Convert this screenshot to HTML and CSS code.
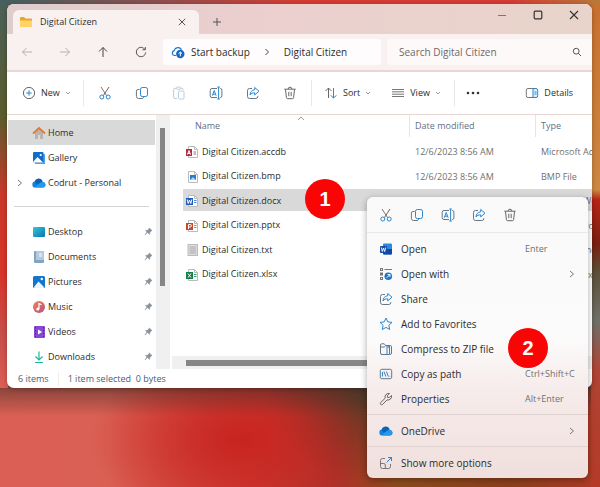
FILE: index.html
```
<!DOCTYPE html>
<html lang="en">
<head>
<meta charset="utf-8">
<title>Digital Citizen</title>
<link rel="stylesheet" href="styles.css">
</head>
<body>
<svg class="defs" aria-hidden="true">
  <symbol id="cut" viewBox="0 0 14 14"><path d="M3 1l5.6 8.6" stroke="#8a7068"/><path d="M11 1L5.4 9.6" stroke="#666"/><circle cx="3.8" cy="11" r="2" stroke="#2b86cf"/><circle cx="10.2" cy="11" r="2" stroke="#2b86cf"/></symbol>
  <symbol id="copy" viewBox="0 0 14 14"><path d="M4.500 3.500H3a1.600 1.600 0 0 0-1.600 1.600v5.200A2.200 2.200 0 0 0 3.600 12.500h3.400a1.600 1.600 0 0 0 1.600-1.300" stroke="#70757a"/><rect x="5.500" y="1.500" width="7" height="9" rx="1.800" stroke="#2b86cf"/></symbol>
  <symbol id="paste" viewBox="0 0 14 14"><path d="M5 12.500H3A1.300 1.300 0 0 1 1.700 11.200V3.500A1.200 1.200 0 0 1 3 2.300h1.500M8.500 2.300H10a1 1 0 0 1 1 1V4" stroke="#c4c8cc"/><rect x="4.500" y="1" width="4" height="2.300" rx="1" stroke="#c4c8cc"/><rect x="6.500" y="5" width="5.500" height="8" rx="1" stroke="#b3d0e8"/></symbol>
  <symbol id="rename" viewBox="0 0 14 14"><path d="M8 2.500H3A1.800 1.800 0 0 0 1.200 4.300v5.400A1.800 1.800 0 0 0 3 11.500h5M11 2.500h.3a1.600 1.600 0 0 1 1.600 1.600v5.800a1.600 1.600 0 0 1-1.600 1.600H11" stroke="#667684"/><path d="M9.600 1v12M8.300 1h2.600M8.300 13h2.600M3.300 9.700l1.900-5.200 1.900 5.200M4 8.200h2.500" stroke="#2b86cf"/></symbol>
  <symbol id="share" viewBox="0 0 14 14"><path d="M6 2.500H3.500a2 2 0 0 0-2 2v6a2 2 0 0 0 2 2h6.300a2 2 0 0 0 2-2V10" stroke="#667684"/><path d="M8.700 1.500L13 5.200 8.700 8.900V6.800C6.500 6.700 5 7.400 4 9c.2-3 1.800-5 4.700-5.200z" stroke="#2b86cf"/></symbol>
  <symbol id="trash" viewBox="0 0 14 14"><path d="M1.300 3.200h11.400M5.200 3a1.800 1.800 0 0 1 3.600 0M2.500 3.500l.9 8.200a1.200 1.200 0 0 0 1.200 1h4.800a1.200 1.200 0 0 0 1.200-1l.9-8.200M5.800 5.800v4.400M8.200 5.800v4.400" stroke="#666"/></symbol>
  <symbol id="chev" viewBox="0 0 6 6"><path d="M1 2l2 2 2-2" stroke="#999"/></symbol>
  <symbol id="right" viewBox="0 0 6 8"><path d="M1 1l3.500 3L1 7" stroke="#777"/></symbol>
  <symbol id="cloud" viewBox="0 0 14 14"><path d="M3.500 11.500a3 3 0 0 1-.3-6A4.300 4.300 0 0 1 11 6a2.800 2.800 0 0 1 .2 5.500z" fill="#1384d8"/><path d="M2.500 5.700a4.300 4.300 0 0 1 8-.8L5 9z" fill="#0b62b8"/><path d="M5 9l5-3a3 3 0 0 1 3.500 3.500q-.4 2-2.300 2H4z" fill="#2299ea"/></symbol>
  <symbol id="pin" viewBox="0 0 10 10"><path d="M5.800 1l3.200 3-1 .4-1.500 1.800-.3 2L3.900 6.200 1 9l2.200-3.400L1.600 3.900l2.300-.2L5.500 2z" fill="#89919a" stroke="#89919a" stroke-width=".5"/></symbol>
  <symbol id="picture" viewBox="0 0 14 14"><rect x="1" y="1" width="12" height="12" rx="1.500" fill="#1475cf"/><path d="M2 12l4.500-5.500L12 12q0 1-1 1H3Q2 13 2 12z" fill="#e9f6ff"/><circle cx="9.800" cy="4" r="1.200" fill="#fff"/></symbol>
  <symbol id="page" viewBox="0 0 14 14"><path d="M3.500 1.500h6l3 3v8h-9z" fill="#fff" stroke="#bbb"/><path d="M9.500 1.500v3h3" stroke="#bbb"/></symbol>
</svg>

<main class="desktop">
<section class="window">
  <header class="titlebar">
    <div class="tab">
      <svg class="i14" viewBox="0 0 14 14"><path d="M1 3q0-1 1-1h3l1.500 1.500H12q1 0 1 1V11q0 1-1 1H2q-1 0-1-1z" fill="#e7a62c"/><path d="M1 5.500h12V11q0 1-1 1H2q-1 0-1-1z" fill="#ffd366"/></svg>
      <span class="tab-title">Digital Citizen</span>
      <button aria-label="Close tab"><svg class="i8" viewBox="0 0 8 8"><path d="M.8.800l6.400 6.400M7.200.8L.8 7.200" stroke="#555"/></svg></button>
    </div>
    <button class="new-tab" aria-label="New tab"><svg class="i8" viewBox="0 0 8 8"><path d="M4 0v8M0 4h8" stroke="#555"/></svg></button>
    <div class="controls">
      <button aria-label="Minimize"><svg class="i10" viewBox="0 0 10 10"><path d="M1 5.500h8" stroke="#777"/></svg></button>
      <button aria-label="Maximize"><svg class="i10" viewBox="0 0 10 10"><rect x="1.200" y="1.200" width="7.600" height="7.600" rx="1" stroke="#333" stroke-width="1.200"/></svg></button>
      <button aria-label="Close"><svg class="i10" viewBox="0 0 10 10"><path d="M1 1l8 8M9 1L1 9" stroke="#333" stroke-width="1.100"/></svg></button>
    </div>
  </header>

  <nav class="navbar">
    <div class="arrows">
      <button aria-label="Back"><svg class="i12" viewBox="0 0 12 12"><path d="M11 6H1.500M5.500 2l-4 4 4 4" stroke="#b9aeae"/></svg></button>
      <button aria-label="Forward"><svg class="i12" viewBox="0 0 12 12"><path d="M1 6h9.500M6.500 2l4 4-4 4" stroke="#b9aeae"/></svg></button>
      <button aria-label="Up"><svg class="i12" viewBox="0 0 12 12"><path d="M6 11V1.500M2 5.500l4-4 4 4" stroke="#444"/></svg></button>
      <button aria-label="Refresh"><svg class="i12" viewBox="0 0 12 12"><path d="M10 3.500A4.700 4.700 0 1 0 10.700 6.500M10.300 1v2.800H7.500" stroke="#555"/></svg></button>
    </div>
    <div class="address">
      <svg class="i14" viewBox="0 0 14 14"><path d="M5 10.500H3.500A2.500 2.500 0 0 1 3.200 5.600a4 4 0 0 1 7.300-1" stroke="#1976c8" stroke-width="1.200"/><circle cx="9.300" cy="9" r="4.200" fill="#1466c0"/><path d="M9.300 11.300V7M7.500 8.700L9.300 7l1.800 1.700" stroke="#fff"/></svg>
      <a href="#">Start backup</a>
      <svg class="i8" viewBox="0 0 8 8"><path d="M2.500 1l3 3-3 3" stroke="#444"/></svg>
      <a href="#">Digital Citizen</a>
    </div>
    <label class="search">
      <input type="text" placeholder="Search Digital Citizen" aria-label="Search Digital Citizen">
      <svg class="i10" viewBox="0 0 10 10"><circle cx="4.200" cy="4.200" r="2.900" stroke="#555"/><path d="M6.300 6.300L9 9" stroke="#555"/></svg>
    </label>
  </nav>

  <div class="toolbar">
    <button class="labelled new"><svg class="i14" viewBox="0 0 14 14"><circle cx="7" cy="7" r="5.600" stroke="#666"/><path d="M7 4.300v5.400M4.300 7h5.400" stroke="#2b86cf"/></svg>New<svg class="i6"><use href="#chev"/></svg></button>
    <div class="tools">
      <button aria-label="Cut"><svg class="i14"><use href="#cut"/></svg></button>
      <button aria-label="Copy"><svg class="i14"><use href="#copy"/></svg></button>
      <button aria-label="Paste"><svg class="i14"><use href="#paste"/></svg></button>
      <button aria-label="Rename"><svg class="i14"><use href="#rename"/></svg></button>
      <button aria-label="Share"><svg class="i14"><use href="#share"/></svg></button>
      <button aria-label="Delete"><svg class="i14"><use href="#trash"/></svg></button>
    </div>
    <div class="arrange">
      <button class="labelled"><svg class="i14" viewBox="0 0 14 14"><path d="M4.500 12V2M1.500 5l3-3 3 3" stroke="#666"/><path d="M9.500 2v10M6.800 9.300L9.500 12l3-2.700" stroke="#2b86cf"/></svg>Sort<svg class="i6"><use href="#chev"/></svg></button>
      <button class="labelled"><svg class="i14" viewBox="0 0 14 14"><path d="M1 3.500h12M1 5.800h12M1 8.200h12M1 10.500h12" stroke="#777"/></svg>View<svg class="i6"><use href="#chev"/></svg></button>
    </div>
    <button class="more" aria-label="See more"><svg class="i14" viewBox="0 0 14 14"><circle cx="2" cy="7" r="1.300" fill="#333"/><circle cx="7" cy="7" r="1.300" fill="#333"/><circle cx="12" cy="7" r="1.300" fill="#333"/></svg></button>
    <button class="labelled details"><svg class="i14" viewBox="0 0 14 14"><path d="M8.500 2.500H3A1.700 1.700 0 0 0 1.300 4.200v5.600A1.700 1.700 0 0 0 3 11.500h5.500" stroke="#777"/><path d="M8 2.500h3a1.700 1.700 0 0 1 1.700 1.700v5.600a1.700 1.700 0 0 1-1.700 1.700H8z" fill="#d9efff" stroke="#2b86cf"/><path d="M9.500 6h2M9.500 8h2" stroke="#2b86cf"/></svg>Details</button>
  </div>

  <div class="body">
    <aside class="sidebar">
      <a class="place current" href="#"><svg class="i14" viewBox="0 0 14 14"><path d="M3 6v7h3V9h2v4h3V6L7 2.500z" fill="#b8b4b2"/><path d="M1 7.500L7 2l6 5.500" stroke="#e27a2d" stroke-width="1.700"/></svg>Home</a>
      <a class="place" href="#"><svg class="i14" viewBox="0 0 14 14"><path d="M3 3h10v10H3z" fill="#4ba4e8"/><path d="M1 2q0-1 1-1h8.500q1 0 1 1v9.500H2q-1 0-1-1z" fill="#146cc8"/><path d="M1 11l4.500-5L11 11.500H2z" fill="#fff"/><circle cx="8.700" cy="4" r="1.100" fill="#fff"/></svg>Gallery</a>
      <a class="place" href="#"><svg class="i8 expand"><use href="#right"/></svg><svg class="i14"><use href="#cloud"/></svg>Codrut - Personal</a>
      <hr>
      <a class="place" href="#"><svg class="i14" viewBox="0 0 14 14"><linearGradient id="teal" x2="1" y2="1"><stop stop-color="#39c6cf"/><stop offset="1" stop-color="#0875b8"/></linearGradient><rect x="1" y="2" width="12" height="10" rx="1" fill="url(#teal)"/></svg>Desktop<svg class="pin"><use href="#pin"/></svg></a>
      <a class="place" href="#"><svg class="i14" viewBox="0 0 14 14"><rect x="2" y="1" width="10" height="12" rx="1" fill="#83a3c2"/><path d="M4 1h8v9H4z" fill="#b4c9dc"/><path d="M7 4h3M7 6h3" stroke="#fff"/></svg>Documents<svg class="pin"><use href="#pin"/></svg></a>
      <a class="place" href="#"><svg class="i14"><use href="#picture"/></svg>Pictures<svg class="pin"><use href="#pin"/></svg></a>
      <a class="place" href="#"><svg class="i14" viewBox="0 0 14 14"><linearGradient id="coral" x2="1" y2="1"><stop stop-color="#ed824e"/><stop offset="1" stop-color="#b95186"/></linearGradient><circle cx="7" cy="7" r="6" fill="url(#coral)"/><circle cx="5.800" cy="9" r="1.500" fill="#fff"/><path d="M7 9V3.500l2.500 1.200" stroke="#fff" stroke-width="1.200"/></svg>Music<svg class="pin"><use href="#pin"/></svg></a>
      <a class="place" href="#"><svg class="i14" viewBox="0 0 14 14"><rect x="2" y="1" width="11" height="12" rx="1" fill="#8748d4"/><path d="M3.500 2v10M11.500 2v10" stroke="#5520a5" stroke-dasharray="1.500 1.500"/><path d="M6 4.500l4 2.500-4 2.500z" fill="#fff"/></svg>Videos<svg class="pin"><use href="#pin"/></svg></a>
      <a class="place" href="#"><svg class="i14" viewBox="0 0 14 14"><path d="M7 1.500v8M3.500 6.500L7 10l3.500-3.500M3 12.500h8" stroke="#22b69a" stroke-width="1.200"/></svg>Downloads<svg class="pin"><use href="#pin"/></svg></a>
    </aside>
    <div class="vscroll"><div class="thumb"></div></div>
    <div class="files">
      <svg class="sorted" viewBox="0 0 8 5"><path d="M1 4l3-3 3 3" stroke="#999"/></svg>
      <table>
        <colgroup><col class="c-name"><col class="c-date"><col></colgroup>
        <thead><tr><th>Name</th><th>Date modified</th><th>Type</th></tr></thead>
        <tbody>
          <tr><td><svg class="i14"><use href="#page"/><path d="M1 4h6v7H1z" fill="#b52b41"/><path d="M2.500 9.500L4 5.500l1.500 4M3 8.500h2" stroke="#fff"/><path d="M8.500 7h2.500M8.500 9h2.500" stroke="#c85b68"/></svg>Digital Citizen.accdb</td><td>12/6/2023 8:56 AM</td><td>Microsoft Access Database</td></tr>
          <tr><td><svg class="i14"><use href="#page"/><rect x="5" y="5" width="6" height="5" fill="#2b79ca"/><path d="M5 10l3-3 3 3z" fill="#a8d4f5"/></svg>Digital Citizen.bmp</td><td>12/6/2023 8:56 AM</td><td>BMP File</td></tr>
          <tr class="selected"><td><svg class="i14"><use href="#page"/><path d="M1 4h7v7H1z" fill="#245bbb"/><path d="M2.200 5.500l1 4 1.300-3.500 1.300 3.500 1-4" stroke="#fff"/><path d="M9 6.500h2.500M9 8.500h2.500" stroke="#438ada"/></svg>Digital Citizen.docx</td><td>12/6/2023 8:56 AM</td><td>Microsoft Word Document</td></tr>
          <tr><td><svg class="i14"><use href="#page"/><path d="M1 4h7v7H1z" fill="#cb4628"/><path d="M3.500 10V5.500H5q1.500 0 1.500 1.200T5 8H3.500" stroke="#fff"/><path d="M9 6.500h2.500M9 8.500h2.500" stroke="#da7959"/></svg>Digital Citizen.pptx</td><td>12/6/2023 8:56 AM</td><td>Microsoft PowerPoint Presentation</td></tr>
          <tr><td><svg class="i14"><rect x="3" y="1.500" width="9.500" height="11" fill="#ddd" stroke="#bbb"/><path d="M4.500 4h6.500M4.500 6h6.500M4.500 8h6.500M4.500 10h6.500" stroke="#aaa"/></svg>Digital Citizen.txt</td><td>12/6/2023 8:56 AM</td><td>Text Document</td></tr>
          <tr><td><svg class="i14"><use href="#page"/><path d="M1 4h7v7H1z" fill="#14804a"/><path d="M3 5.500l3 4M6 5.500l-3 4" stroke="#fff"/><path d="M9 6.500h2.500M9 8.500h2.500" stroke="#36a56c"/></svg>Digital Citizen.xlsx</td><td>12/6/2023 8:56 AM</td><td>Microsoft Excel Worksheet</td></tr>
        </tbody>
      </table>
      <div class="hscroll"><div class="thumb"></div></div>
    </div>
  </div>
  <footer class="status"><span>6 items</span><span class="picked">1 item selected&nbsp; 0 bytes</span></footer>
</section>

<div class="menu" role="menu">
  <div class="quick">
    <button aria-label="Cut"><svg class="i14"><use href="#cut"/></svg></button>
    <button aria-label="Copy"><svg class="i14"><use href="#copy"/></svg></button>
    <button aria-label="Rename"><svg class="i14"><use href="#rename"/></svg></button>
    <button aria-label="Share"><svg class="i14"><use href="#share"/></svg></button>
    <button aria-label="Delete"><svg class="i14"><use href="#trash"/></svg></button>
  </div>
  <div class="group">
    <button class="entry" role="menuitem"><svg class="i14" viewBox="0 0 14 14"><rect x="4" y="1.500" width="9" height="11" rx="1" fill="#2b8ae0"/><path d="M4 7h9v4.500q0 1-1 1H5q-1 0-1-1z" fill="#1547a0"/><rect x="1" y="4" width="7" height="7" rx=".8" fill="#174ea6"/><path d="M2.300 5.500l1 4 1.200-3.500 1.200 3.500 1-4" stroke="#fff" stroke-width=".9"/></svg>Open<kbd>Enter</kbd></button>
    <button class="entry" role="menuitem"><svg class="i14" viewBox="0 0 14 14"><rect x="1.500" y="1.500" width="2" height="2" stroke="#777"/><rect x="1.500" y="6" width="2" height="2" stroke="#777"/><rect x="1.500" y="10.500" width="2" height="2" stroke="#777"/><path d="M5.500 2.500H13" stroke="#777"/><circle cx="9.300" cy="9.200" r="3.800" fill="#1977ce"/><path d="M7.800 10.700l3-3M8.600 7.500h2.400v2.400" stroke="#fff"/></svg>Open with<svg class="i8 go"><use href="#right"/></svg></button>
    <button class="entry" role="menuitem"><svg class="i14"><use href="#share"/></svg>Share</button>
    <button class="entry" role="menuitem"><svg class="i14" viewBox="0 0 14 14"><path d="M7 1l1.800 3.900 4.200.5-3.100 2.900.8 4.200L7 10.400l-3.700 2.100.8-4.200L1 5.400l4.200-.5z" stroke="#2b86cf"/></svg>Add to Favorites</button>
    <button class="entry" role="menuitem"><svg class="i14" viewBox="0 0 14 14"><path d="M8 12.500H3A1.500 1.500 0 0 1 1.500 11V3A1.300 1.300 0 0 1 2.800 1.800h2.400L6.800 3.500h4.400a1.300 1.300 0 0 1 1.300 1.300V11a1.500 1.500 0 0 1-1.500 1.500M1.500 5h3.700l1.600-1.500" stroke="#667684"/><path d="M8 4v8.500h2.500V4M9.200 3v3" stroke="#2b86cf"/></svg>Compress to ZIP file</button>
    <button class="entry" role="menuitem"><svg class="i14" viewBox="0 0 14 14"><rect x="1.300" y="2.300" width="11.400" height="9.400" rx="1.500" stroke="#667684"/><path d="M3.500 5v4.500M5 4.500l1.800 5M7.500 4.500l1.800 5M10.500 9.300h.7" stroke="#2b86cf"/></svg>Copy as path<kbd>Ctrl+Shift+C</kbd></button>
    <button class="entry" role="menuitem"><svg class="i14" viewBox="0 0 14 14"><path d="M12.500 3.500L10.300 5.500 8.500 5.300 8.300 3.600 10.500 1.500A3.600 3.600 0 0 0 6.200 6.200L1.700 10.500a1.300 1.300 0 0 0 1.900 1.900L8 7.900a3.600 3.600 0 0 0 4.500-4.400z" stroke="#666"/></svg>Properties<kbd>Alt+Enter</kbd></button>
  </div>
  <div class="group"><button class="entry" role="menuitem"><svg class="i14"><use href="#cloud"/></svg>OneDrive<svg class="i8 go"><use href="#right"/></svg></button></div>
  <div class="group"><button class="entry" role="menuitem"><svg class="i14" viewBox="0 0 14 14"><path d="M6 2.500H3.500a2 2 0 0 0-2 2v6a2 2 0 0 0 2 2h6a2 2 0 0 0 2-2V8M1.500 7.500h3.300a1.500 1.500 0 0 1 1.500 1.500v3.500" stroke="#777"/><path d="M7.500 6.500l5-5M9 1.500h3.500V5" stroke="#2b86cf"/></svg>Show more options</button></div>
</div>
<div class="step first">1</div>
<div class="step second">2</div>
</main>
</body>
</html>
```

FILE: styles.css
```
* { box-sizing: border-box; }
body {
  margin: 0;
  font: 9px/14px "Open Sans", "Noto Sans", sans-serif;
  color: #2c2c2c;
}
button, input { font: inherit; color: inherit; border: 0; padding: 0; background: none; }
button { display: flex; align-items: center; justify-content: center; white-space: nowrap; }
a { color: inherit; text-decoration: none; }
svg { fill: none; flex: none; }
.defs { display: none; }
.i14 { width: 14px; height: 14px; }
.i12 { width: 12px; height: 12px; }
.i10 { width: 10px; height: 10px; }
.i8 { width: 8px; height: 8px; }
.i6 { width: 6px; height: 6px; }

.desktop {
  position: relative;
  min-height: 100vh;
  padding: 4px 8px 0 7px;
  overflow: hidden;
  background:
    linear-gradient(90deg, #43605f, #8a5050 25%, #d63c34 50%, #d63c34 85%, #b87a38) top / 100% 5px no-repeat,
    linear-gradient(#4a6058, #5c5c2c 30%, #c8382a 50%, #d83428 70%, #c84e48 86%, #dc5f54) left top / 8px 388px no-repeat,
    linear-gradient(#c8702f, #cc8842 39%, #b82416 41%, #7a2012 50%, #5c5038 56%, #70706a 66%, #b04434 76%, #b53a28) right top / 9px 100% no-repeat,
    linear-gradient(#4a302899, #4a302800) left 0 top 386px / 100% 30px no-repeat,
    radial-gradient(ellipse 150px 90px at 240px 440px, #c82420, #c8242000),
    radial-gradient(ellipse 100px 90px at 365px 390px, #4a3c28, #4a3c2800),
    linear-gradient(90deg, #dc5f54, #da6054 18%, #cc3c32 42%, #a83228 56%, #8c4c1c 66%, #8c401c 85%, #b03a26);
}
.window {
  border-radius: 7px;
  overflow: hidden;
  background: #fff;
  box-shadow: 0 1px 5px #0004;
}
.titlebar {
  display: flex;
  height: 30px;
  padding-left: 6px;
  background: linear-gradient(90deg, #dfcccc, #ebcfcf 40%, #e8d4ca);
}
.tab {
  display: flex;
  align-items: center;
  gap: 7px;
  width: 186px;
  margin-top: 6px;
  padding: 0 13px 0 6px;
  border-radius: 6px 6px 0 0;
  background: #f9f1f0;
}
.tab-title { flex: 1; }
.new-tab { width: 36px; padding-top: 6px; }
.controls { display: flex; margin-left: auto; height: 22px; }
.controls button { width: 36px; }
.navbar {
  display: flex;
  align-items: center;
  height: 38px;
  font-size: 10px;
  background: #f9f1f0;
  border-bottom: 2px solid #e9d7d7;
}
.arrows { display: flex; width: 156px; padding-left: 1px; }
.arrows button { width: 38px; }
.address {
  display: flex;
  align-items: center;
  gap: 6px;
  width: 218px;
  height: 26px;
  padding-left: 8px;
  border-radius: 4px;
  background: #fefcfc;
}
.address .i8 { margin: 0 7px; }
.search {
  display: flex;
  align-items: center;
  flex: 1;
  height: 26px;
  margin-left: 6px;
  padding: 0 10px 0 12px;
  border-radius: 4px 0 0 4px;
  background: #fdf9f8;
}
.search input { flex: 1; min-width: 0; outline: 0; }
.search input::placeholder { color: #6d6868; opacity: 1; }
.toolbar {
  display: flex;
  align-items: center;
  height: 43px;
  border-bottom: 1px solid #e6d5d3;
}
.labelled { gap: 5px; }
.new { justify-content: flex-start; width: 77px; height: 26px; padding-left: 15px; border-right: 1px solid #e8e8e8; }
.tools { display: flex; width: 228px; height: 26px; padding-left: 2px; border-right: 1px solid #e8e8e8; }
.tools button { width: 37px; }
.arrange { display: flex; gap: 20px; width: 143px; height: 26px; padding-left: 12px; border-right: 1px solid #e8e8e8; }
.more { width: 36px; }
.details { margin-left: auto; margin-right: 19px; }
.body { display: flex; height: 254px; }
.sidebar { width: 149px; padding: 5px 1px 0; }
.place {
  display: flex;
  align-items: center;
  gap: 2px;
  height: 25px;
  padding: 0 2px 0 24px;
  position: relative;
}
.current { background: #d9d9d9; }
.expand { position: absolute; left: 8px; }
.pin { width: 9px; height: 9px; margin-left: auto; }
.sidebar hr { margin: 11px 6px 12px; border: 0; height: 1px; background: #d4d4d4; }
.vscroll { width: 14px; padding: 13px 5px 0 4px; background: #f0f0f0; }
.vscroll .thumb { height: 158px; background: #868686; }
.files {
  position: relative;
  flex: 1;
  min-width: 0;
  display: flex;
  flex-direction: column;
  padding-left: 13px;
  overflow: hidden;
}
.sorted { position: absolute; left: 127px; top: 1px; width: 8px; height: 5px; }
table { table-layout: fixed; width: 100%; border-spacing: 0; color: #707070; }
.c-name { width: 226px; }
.c-date { width: 126px; }
th { height: 22px; padding: 0 0 0 5px; text-align: left; font-weight: 400; color: #5f6f88; }
th:first-child { padding-left: 12px; }
th + th { border-left: 1px solid #e5e5e5; }
thead::after { content: ""; display: table-row; height: 3px; }
td {
  height: 24px;
  padding: 2px 0 0 6px;
  white-space: nowrap;
  overflow: hidden;
  border-bottom: 2px solid transparent;
  background-clip: padding-box;
}
tr:nth-child(even) td { height: 25px; }
td:first-child { padding-left: 2px; color: #2c2c2c; }
td svg { margin-right: 3px; vertical-align: middle; }
.selected td { background-color: #d9d9d9; }
.hscroll { margin: auto 0 0 -11px; height: 13px; padding: 4px 20px 3px 14px; background: #f0f0f0; }
.hscroll .thumb { height: 6px; background: #868686; }
.status { display: flex; height: 19px; padding: 3px 11px 0; color: #4a5a75; }
.picked { margin-left: 9px; padding-left: 9px; border-left: 1px solid #eee; height: 14px; }

.menu {
  position: absolute;
  top: 197px;
  right: 12px;
  width: 221px;
  border-radius: 6px;
  font-size: 10px;
  background: linear-gradient(#f9f9f9, #fcfbfb 50%, #f6eceb 68%, #f0dfdc);
  box-shadow: 0 2px 7px #0005;
}
.quick { display: flex; height: 36px; padding-left: 3px; border-bottom: 1px solid #e8e8e8; }
.quick button { width: 31px; }
.group { padding: 3px 0; }
.group + .group { border-top: 1px solid #e0d2d0; }
.entry { width: 100%; height: 25px; justify-content: flex-start; gap: 8px; padding-left: 12px; }
kbd {
  width: 63px;
  margin-left: auto;
  text-align: left;
  font: 9px/14px "Open Sans", "Noto Sans", sans-serif;
  color: #707070;
}
.go { margin: 0 12px 0 auto; }
.step {
  position: absolute;
  width: 40px;
  height: 40px;
  border-radius: 50%;
  background: #f90505;
  color: #fff;
  font: bold 20px/40px "Liberation Sans", Arial, sans-serif;
  text-align: center;
}
.first { left: 305px; top: 179px; }
.second { right: 52px; top: 328px; }
```
